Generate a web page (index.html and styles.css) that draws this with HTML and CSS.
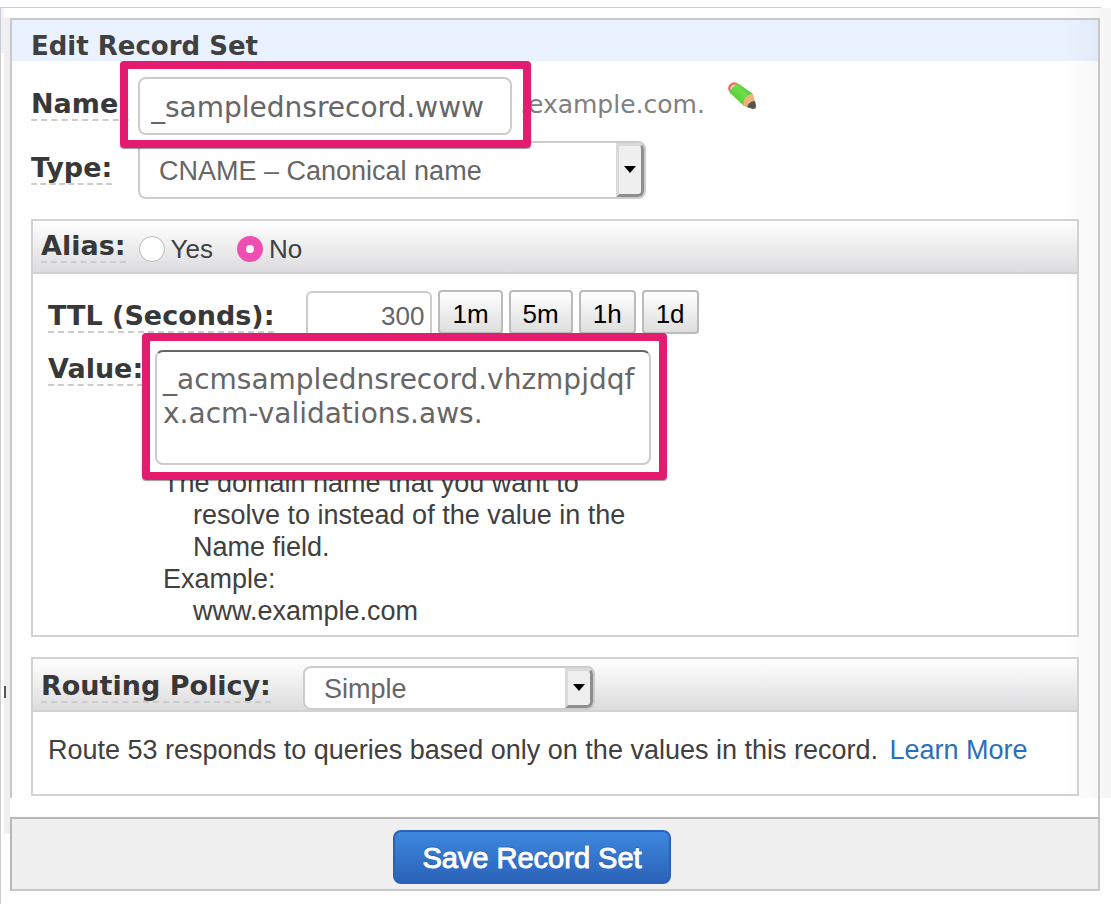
FILE: index.html
```html
<!DOCTYPE html>
<html lang="en">
<head>
<meta charset="utf-8">
<title>Edit Record Set</title>
<link rel="stylesheet" href="styles.css">
</head>
<body>
<div class="top-line"></div>
<main class="workspace">
  <div class="rail"></div>
  <form class="dialog">
    <div class="panel">
      <h1 class="panel-title">Edit Record Set</h1>
      <div class="panel-body">
        <div class="row row-name">
          <div class="label-col"><label class="label" for="name">Name:</label></div>
          <div class="callout callout-name"><input class="field name-field" id="name" type="text" value="_samplednsrecord.www"></div>
          <span class="suffix">.example.com.</span>
          <svg class="pencil" viewBox="0 0 30 30" aria-hidden="true">
            <defs><linearGradient id="lead" x1="0" y1="1" x2="1" y2="0"><stop offset="0" stop-color="#3c9a20"/><stop offset=".3" stop-color="#5ccf38"/><stop offset=".6" stop-color="#6be04a"/><stop offset="1" stop-color="#3f9c26"/></linearGradient></defs>
            <path d="M2 10C-1 5 5-1 10 2L13 4 4 13Z" fill="#e8705c"/>
            <path d="M4 10C2 6 6 2 10 4L12 6 6 12Z" fill="#f3d9d4"/>
            <path d="M3 12C3 8 8 3 12 3L26 13C21 14 16 19 17 25Z" fill="url(#lead)"/>
            <path d="M17 25C15 19 20 13 26 13L29 25Q28 28 25 28Z" fill="#f0b27c"/>
            <path d="M20 26C21 23 24 20 28 20L29 25Q29 28 26 28Z" fill="#555"/>
          </svg>
        </div>
        <div class="row row-type">
          <div class="label-col"><label class="label" for="type">Type:</label></div>
          <div class="select type-select"><select id="type"><option>CNAME – Canonical name</option></select></div>
        </div>

        <section class="box">
          <div class="box-head" role="radiogroup" aria-labelledby="alias-label">
            <span class="label" id="alias-label">Alias:</span>
            <label class="choice"><input type="radio" name="alias">Yes</label>
            <label class="choice"><input type="radio" name="alias" checked>No</label>
          </div>
          <div class="box-body record-body">
            <div class="row row-ttl">
              <label class="label" for="ttl">TTL (Seconds):</label>
              <div class="ttl-controls">
                <input class="field ttl-field" id="ttl" type="text" value="300">
                <button class="preset" type="button">1m</button>
                <button class="preset" type="button">5m</button>
                <button class="preset" type="button">1h</button>
                <button class="preset" type="button">1d</button>
              </div>
            </div>
            <div class="row row-value">
              <div class="value-col"><label class="label" for="value">Value:</label></div>
              <div class="value-main">
                <div class="callout callout-value"><textarea class="field value-field" id="value">_acmsamplednsrecord.vhzmpjdqfx.acm-validations.aws.</textarea></div>
                <div class="help">
                  <p>The domain name that you want to resolve to instead of the value in the Name field.</p>
                  <p>Example:<br>www.example.com</p>
                </div>
              </div>
            </div>
          </div>
        </section>

        <section class="box">
          <div class="box-head routing-head">
            <label class="label" for="routing">Routing Policy:</label>
            <div class="select routing-select"><select id="routing"><option>Simple</option></select></div>
          </div>
          <div class="box-body routing-body">
            Route 53 responds to queries based only on the values in this record. <a class="link" href="#">Learn More</a>
          </div>
        </section>
      </div>
    </div>
    <div class="spacer"></div>
    <footer class="footer"><button class="save" type="submit">Save Record Set</button></footer>
  </form>
</main>
</body>
</html>
```

FILE: styles.css
```css
*, *::before, *::after { box-sizing: border-box; }

body {
  margin: 0;
  padding-top: 7px;
  background: #fff;
  color: #404040;
  font: 27px/32px "Liberation Sans", Arial, sans-serif;
}

input, select, textarea, button { font: inherit; margin: 0; }

.top-line { height: 1px; margin-right: 10px; background: #ccc; }

.workspace {
  display: flex;
  min-height: calc(100vh - 8px);
  padding-right: 11px;
  border-left: 1px solid #ccc;
  background: linear-gradient(to left, #f5f5f5, #fff) no-repeat top right / 50px 790px;
}

.rail {
  width: 9px;
  flex: none;
  background:
    linear-gradient(#555, #555) no-repeat 3px 678px / 2px 12px,
    linear-gradient(#ebf2fe, #ebf2fe) no-repeat 0 0 / 3px 45px,
    linear-gradient(#efefef, #efefef) no-repeat 3px 10px / 6px 816px;
}

.dialog { flex: 1; min-width: 0; margin-top: 10px; }

.panel { border: 2px solid #c8c8c8; border-bottom: 0; }

.panel-title {
  margin: 0;
  padding: 10px 19px 0;
  height: 41px;
  background: rgba(0, 90, 250, 0.08);
  font: bold 26px/32px "DejaVu Sans", Verdana, sans-serif;
}

.panel-body { padding: 16px 19px 2px; }

.row { display: flex; align-items: flex-start; }

.label {
  display: inline-block;
  padding-top: 1px;
  border-bottom: 2px dashed #ccc;
  color: #383838;
  font: bold 27px/31px "DejaVu Sans", Verdana, sans-serif;
  white-space: nowrap;
}

.label-col { width: 107px; flex: none; padding-top: 10px; }

.field {
  display: block;
  border: 2px solid #ccc;
  border-radius: 8px;
  background: #fff;
  color: #666;
}

/* Highlight frames drawn over the fields */
.callout { position: relative; }
.callout::after {
  content: "";
  position: absolute;
  z-index: 2;
  border: 8px solid #e31c70;
  border-radius: 4px;
  box-shadow: 0 1px 1px rgba(0, 0, 0, 0.4);
  pointer-events: none;
}
.callout-name::after { inset: -16px -19px -13px -18px; }
.callout-value::after { inset: -17px -16px -15px -13px; }

.name-field {
  width: 374px;
  height: 58px;
  padding: 2px 11px 0;
  font-family: "DejaVu Sans", Verdana, sans-serif;
  font-size: 28px;
}

.suffix {
  padding: 12px 0 0 8px;
  color: #808080;
  font-family: "DejaVu Sans", Verdana, sans-serif;
  font-size: 25px;
}

.pencil { width: 30px; height: 30px; margin: 4px 0 0 22px; }

.row-type { margin: 6px 0 20px; }

.select { position: relative; }
.select select {
  display: block;
  width: 100%;
  height: 100%;
  padding: 2px 40px 0 19px;
  border: 2px solid #ccc;
  border-radius: 8px;
  background: #fff;
  color: #666;
  appearance: none;
}
.select::before {
  content: "";
  position: absolute;
  inset: 2px 2px 2px auto;
  width: 28px;
  border: 3px solid;
  border-color: #dadada #8e8e8e #8e8e8e #dadada;
  border-radius: 0 6px 6px 0;
  background: #efefef;
  pointer-events: none;
}
.select::after {
  content: "";
  position: absolute;
  top: 50%;
  right: 10px;
  margin-top: -4px;
  border: 6px solid transparent;
  border-top: 7px solid #000;
  border-bottom: 0;
  pointer-events: none;
}
.type-select { width: 508px; height: 58px; }
.routing-select { width: 292px; height: 44px; margin-top: 7px; }

.box { border: 2px solid #d2d2d2; }
.box + .box { margin-top: 20px; }

.box-head {
  display: flex;
  align-items: flex-start;
  height: 53px;
  padding-left: 8px;
  border-bottom: 2px solid #d2d2d2;
  background: linear-gradient(#fff, #dcdcde);
}
.box-head .label { margin-top: 8px; }
.routing-head { gap: 32px; }
.routing-head .label { margin-top: 10px; }

.choice {
  display: flex;
  align-items: center;
  gap: 6px;
  margin: 12px 0 0 13px;
  font-size: 26px;
}
.choice + .choice { margin-left: 24px; }
.choice input {
  width: 26px;
  height: 26px;
  border: 1px solid #bbb;
  border-radius: 50%;
  background: #fff;
  appearance: none;
}
.choice input:checked { border: 9px solid #ef4fb0; }

.box-body { padding: 16px 15px; }
.record-body { padding: 16px 15px 8px; }

.row-ttl { height: 43px; gap: 32px; }
.row-ttl .label { margin-top: 9px; }
.ttl-controls { display: flex; gap: 6px; font-size: 26px; }
.ttl-field {
  width: 126px;
  height: 50px;
  margin-top: 1px;
  padding: 0 6px;
  border-radius: 6px;
  text-align: right;
}
.preset {
  height: 44px;
  padding: 4px 12px 0;
  border: 2px solid #bbb;
  border-radius: 4px;
  background: linear-gradient(#fff, #dedede);
  color: #000;
}

.value-col { width: 107px; flex: none; padding-top: 19px; }
.value-main { padding-top: 17px; }
.value-field {
  width: 496px;
  height: 115px;
  padding: 11px 6px 0;
  border-top-color: #666;
  font-family: "DejaVu Sans", Verdana, sans-serif;
  font-size: 28px;
  line-height: 34px;
  word-break: break-all;
  overflow: hidden;
  resize: none;
}

.help { width: 480px; padding: 2px 0 0 8px; }
.help p { margin: 0; padding-left: 30px; text-indent: -30px; }

.routing-body { padding: 22px 15px 28px; }
.link { margin-left: 4px; color: #2a6fbb; text-decoration: none; }

.spacer { height: 19px; border-right: 2px solid #c8c8c8; }

.footer {
  padding: 11px 46px 5px 0;
  border: 2px solid #c8c8c8;
  border-top-color: #b8b8b8;
  border-left-color: #b8b8b8;
  background: #efefef;
  text-align: center;
}

.save {
  display: inline-block;
  height: 54px;
  padding: 2px 27px 0;
  border: 2px solid #2a62bb;
  border-radius: 8px;
  background: linear-gradient(#3d88de, #2b62b9);
  color: #fff;
  font-size: 29px;
  text-shadow: 0 -1px 1px #1d4c94;
  -webkit-text-stroke: 1px #fff;
  vertical-align: top;
}
```
